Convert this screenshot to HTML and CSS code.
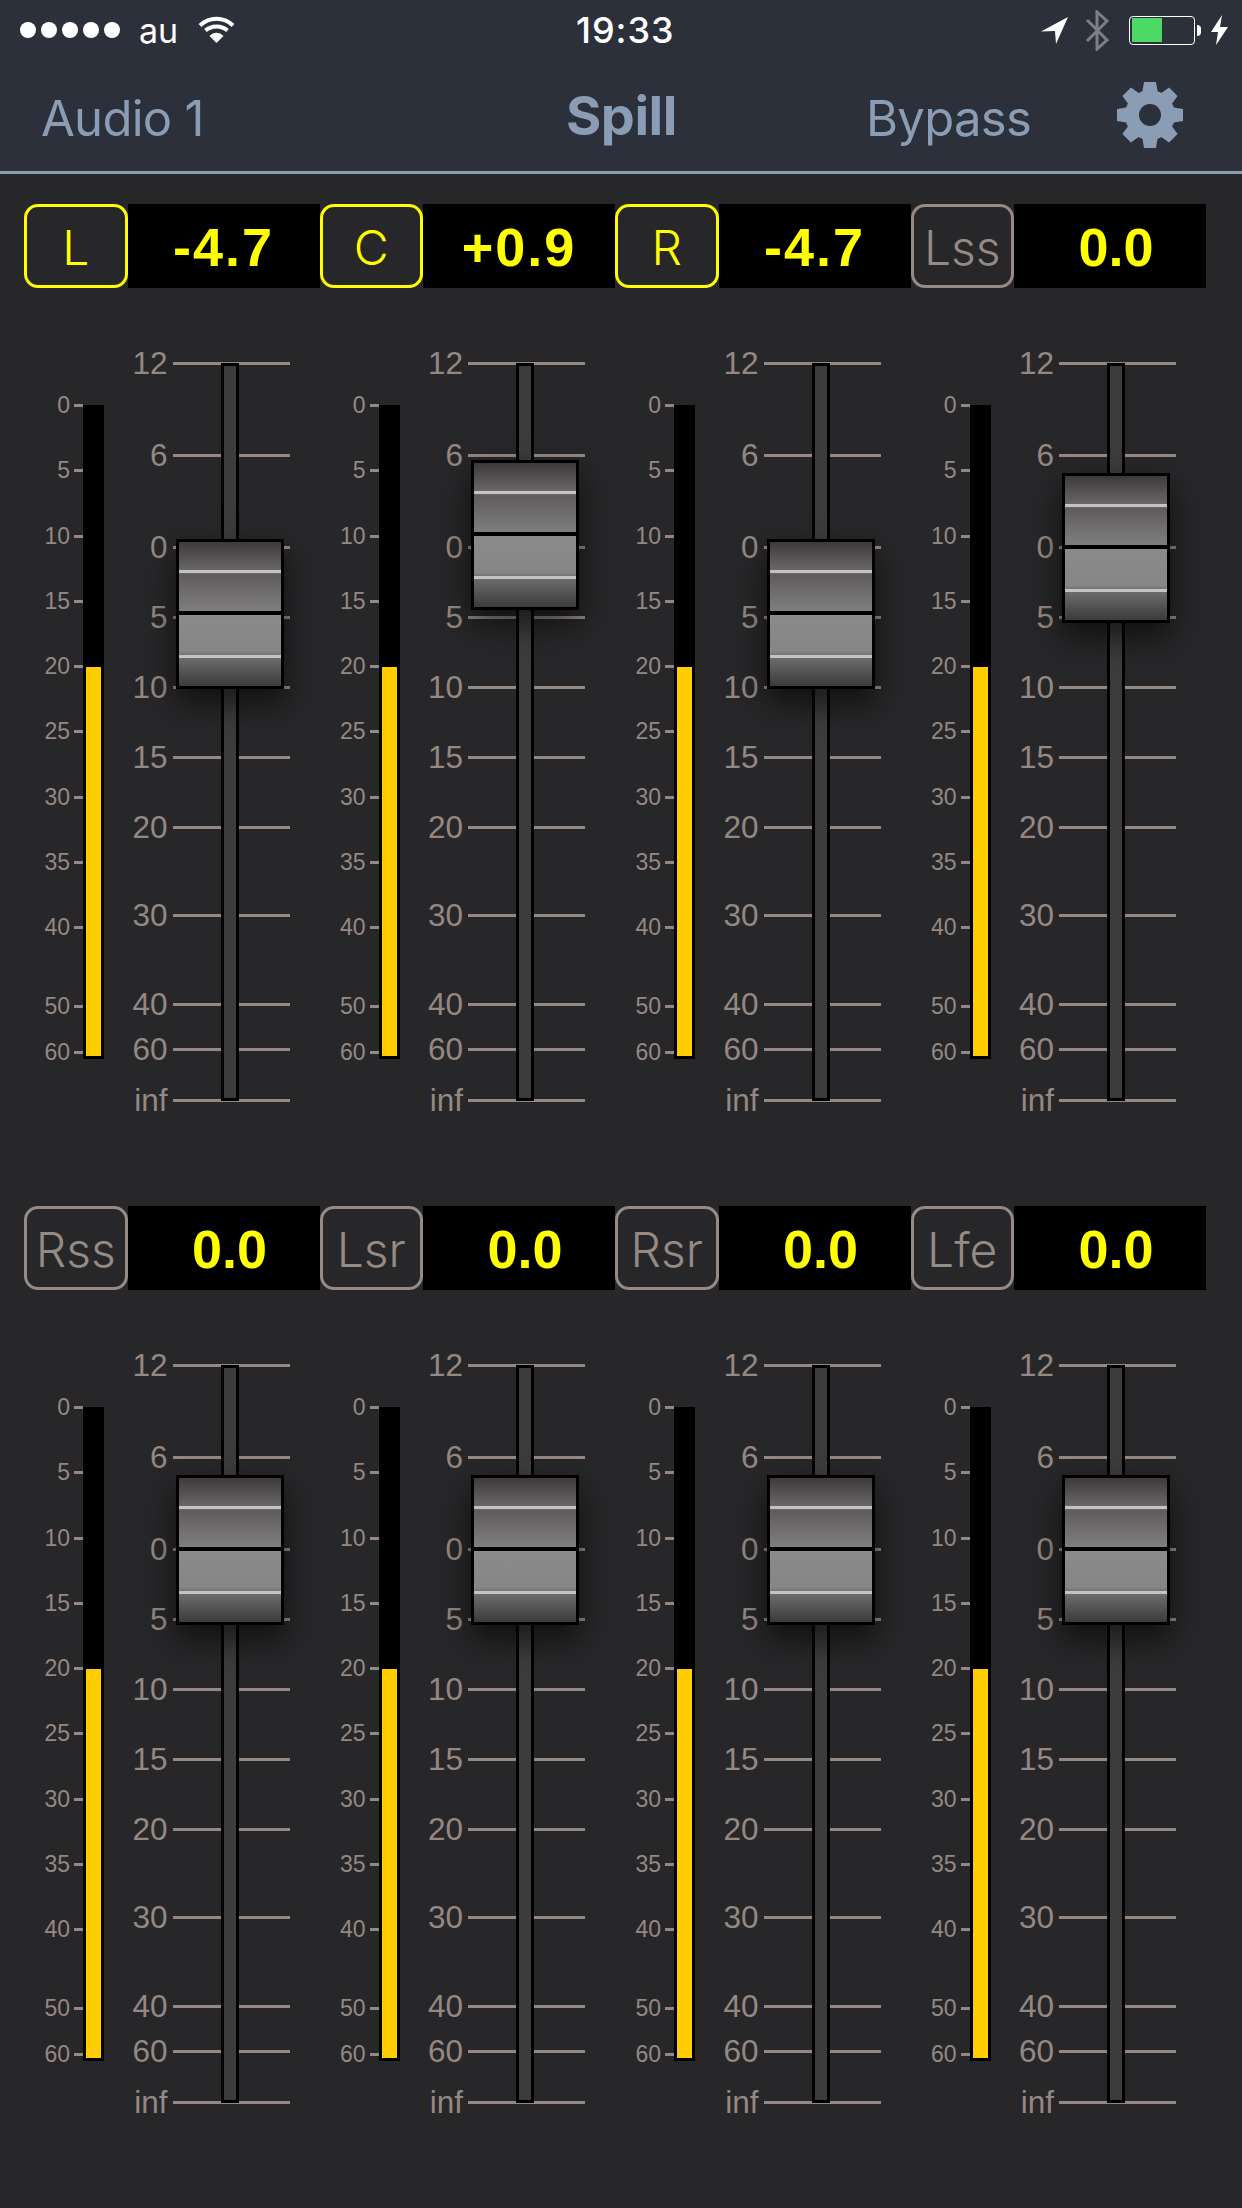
FILE: index.html
```html
<!DOCTYPE html>
<html lang="en">
<head>
  <meta charset="UTF-8">
  <meta name="viewport" content="width=device-width, initial-scale=1.0">
  <title>Spill</title>
  <link rel="stylesheet" href="styles.css">
</head>
<body>
  <header class="topBar">
    <div class="statusBar">
      <div class="statusLeft">
        <div class="signal"><i></i><i></i><i></i><i></i><i></i></div>
        <span class="carrier">au</span>
        <svg class="wifi" viewBox="0 0 37 28">
          <path d="M2 10.5C11.500 1.500 25.500 1.500 35 10.500M7.500 15.500C13.500 10 23.500 10 29.500 15.500" fill="none" stroke="#fff" stroke-width="4"/>
          <path d="M11.500 21C15.500 16.500 21.500 16.500 25.500 21L18.500 28Z" fill="#fff"/>
        </svg>
      </div>
      <span class="clock">19:33</span>
      <div class="statusRight">
        <svg class="arrow" viewBox="0 0 27 27"><path d="M0 14.500L27 0L15 27L14 14Z" fill="#fff"/></svg>
        <svg class="bluetooth" viewBox="0 0 23 41"><path d="M1 10L21 30L11 39V2L21 11L1 31" fill="none" stroke="#7d7f85" stroke-width="3"/></svg>
        <div class="battery"><div class="batteryFill"></div></div>
        <div class="batteryNub"></div>
        <svg class="bolt" viewBox="0 0 17 30"><path d="M11 0L0 17H7L5 30L17 12H9Z" fill="#fff"/></svg>
      </div>
    </div>
    <nav class="navBar">
      <span class="navItem">Audio 1</span>
      <span class="navTitle">Spill</span>
      <span class="navItem">Bypass</span>
      <svg class="gear" viewBox="0 0 66 66">
        <circle cx="33" cy="33" r="25" fill="#8a9db5"/>
        <path d="M27 0H39L41 12H25Z M27 66H39L41 54H25Z" fill="#8a9db5"/>
        <path d="M27 0H39L41 12H25Z M27 66H39L41 54H25Z" fill="#8a9db5" transform="rotate(45 33 33)"/>
        <path d="M27 0H39L41 12H25Z M27 66H39L41 54H25Z" fill="#8a9db5" transform="rotate(90 33 33)"/>
        <path d="M27 0H39L41 12H25Z M27 66H39L41 54H25Z" fill="#8a9db5" transform="rotate(135 33 33)"/>
        <circle cx="33" cy="33" r="11" fill="#2c303b"/>
      </svg>
    </nav>
  </header>

  <main class="mixer">
    <section class="channel">
      <div class="channelHead"><span class="chLabel on">L</span><span class="chValue">-4.7</span></div>
      <div class="channelBody">
        <div class="meterWrap">
          <ol class="meterScale"><li><span>0</span></li><li><span>5</span></li><li><span>10</span></li><li><span>15</span></li><li><span>20</span></li><li><span>25</span></li><li><span>30</span></li><li><span>35</span></li><li><span>40</span></li><li><span>50</span></li><li><span>60</span></li></ol>
          <div class="meter"><div class="meterFill"></div></div>
        </div>
        <div class="fader">
          <ol class="faderScale"><li><span>12</span></li><li><span>6</span></li><li><span>0</span></li><li><span>5</span></li><li><span>10</span></li><li><span>15</span></li><li><span>20</span></li><li><span>30</span></li><li><span>40</span></li><li><span>60</span></li><li><span>inf</span></li></ol>
          <div class="track"></div>
          <div class="thumb" style="top: 176px;"><b></b><b></b></div>
        </div>
      </div>
    </section>

    <section class="channel">
      <div class="channelHead"><span class="chLabel on">C</span><span class="chValue">+0.9</span></div>
      <div class="channelBody">
        <div class="meterWrap">
          <ol class="meterScale"><li><span>0</span></li><li><span>5</span></li><li><span>10</span></li><li><span>15</span></li><li><span>20</span></li><li><span>25</span></li><li><span>30</span></li><li><span>35</span></li><li><span>40</span></li><li><span>50</span></li><li><span>60</span></li></ol>
          <div class="meter"><div class="meterFill"></div></div>
        </div>
        <div class="fader">
          <ol class="faderScale"><li><span>12</span></li><li><span>6</span></li><li><span>0</span></li><li><span>5</span></li><li><span>10</span></li><li><span>15</span></li><li><span>20</span></li><li><span>30</span></li><li><span>40</span></li><li><span>60</span></li><li><span>inf</span></li></ol>
          <div class="track"></div>
          <div class="thumb" style="top: 97px;"><b></b><b></b></div>
        </div>
      </div>
    </section>

    <section class="channel">
      <div class="channelHead"><span class="chLabel on">R</span><span class="chValue">-4.7</span></div>
      <div class="channelBody">
        <div class="meterWrap">
          <ol class="meterScale"><li><span>0</span></li><li><span>5</span></li><li><span>10</span></li><li><span>15</span></li><li><span>20</span></li><li><span>25</span></li><li><span>30</span></li><li><span>35</span></li><li><span>40</span></li><li><span>50</span></li><li><span>60</span></li></ol>
          <div class="meter"><div class="meterFill"></div></div>
        </div>
        <div class="fader">
          <ol class="faderScale"><li><span>12</span></li><li><span>6</span></li><li><span>0</span></li><li><span>5</span></li><li><span>10</span></li><li><span>15</span></li><li><span>20</span></li><li><span>30</span></li><li><span>40</span></li><li><span>60</span></li><li><span>inf</span></li></ol>
          <div class="track"></div>
          <div class="thumb" style="top: 176px;"><b></b><b></b></div>
        </div>
      </div>
    </section>

    <section class="channel">
      <div class="channelHead"><span class="chLabel">Lss</span><span class="chValue zero">0.0</span></div>
      <div class="channelBody">
        <div class="meterWrap">
          <ol class="meterScale"><li><span>0</span></li><li><span>5</span></li><li><span>10</span></li><li><span>15</span></li><li><span>20</span></li><li><span>25</span></li><li><span>30</span></li><li><span>35</span></li><li><span>40</span></li><li><span>50</span></li><li><span>60</span></li></ol>
          <div class="meter"><div class="meterFill"></div></div>
        </div>
        <div class="fader">
          <ol class="faderScale"><li><span>12</span></li><li><span>6</span></li><li><span>0</span></li><li><span>5</span></li><li><span>10</span></li><li><span>15</span></li><li><span>20</span></li><li><span>30</span></li><li><span>40</span></li><li><span>60</span></li><li><span>inf</span></li></ol>
          <div class="track"></div>
          <div class="thumb" style="top: 110px;"><b></b><b></b></div>
        </div>
      </div>
    </section>

    <section class="channel">
      <div class="channelHead"><span class="chLabel">Rss</span><span class="chValue zero">0.0</span></div>
      <div class="channelBody">
        <div class="meterWrap">
          <ol class="meterScale"><li><span>0</span></li><li><span>5</span></li><li><span>10</span></li><li><span>15</span></li><li><span>20</span></li><li><span>25</span></li><li><span>30</span></li><li><span>35</span></li><li><span>40</span></li><li><span>50</span></li><li><span>60</span></li></ol>
          <div class="meter"><div class="meterFill"></div></div>
        </div>
        <div class="fader">
          <ol class="faderScale"><li><span>12</span></li><li><span>6</span></li><li><span>0</span></li><li><span>5</span></li><li><span>10</span></li><li><span>15</span></li><li><span>20</span></li><li><span>30</span></li><li><span>40</span></li><li><span>60</span></li><li><span>inf</span></li></ol>
          <div class="track"></div>
          <div class="thumb" style="top: 110px;"><b></b><b></b></div>
        </div>
      </div>
    </section>

    <section class="channel">
      <div class="channelHead"><span class="chLabel">Lsr</span><span class="chValue zero">0.0</span></div>
      <div class="channelBody">
        <div class="meterWrap">
          <ol class="meterScale"><li><span>0</span></li><li><span>5</span></li><li><span>10</span></li><li><span>15</span></li><li><span>20</span></li><li><span>25</span></li><li><span>30</span></li><li><span>35</span></li><li><span>40</span></li><li><span>50</span></li><li><span>60</span></li></ol>
          <div class="meter"><div class="meterFill"></div></div>
        </div>
        <div class="fader">
          <ol class="faderScale"><li><span>12</span></li><li><span>6</span></li><li><span>0</span></li><li><span>5</span></li><li><span>10</span></li><li><span>15</span></li><li><span>20</span></li><li><span>30</span></li><li><span>40</span></li><li><span>60</span></li><li><span>inf</span></li></ol>
          <div class="track"></div>
          <div class="thumb" style="top: 110px;"><b></b><b></b></div>
        </div>
      </div>
    </section>

    <section class="channel">
      <div class="channelHead"><span class="chLabel">Rsr</span><span class="chValue zero">0.0</span></div>
      <div class="channelBody">
        <div class="meterWrap">
          <ol class="meterScale"><li><span>0</span></li><li><span>5</span></li><li><span>10</span></li><li><span>15</span></li><li><span>20</span></li><li><span>25</span></li><li><span>30</span></li><li><span>35</span></li><li><span>40</span></li><li><span>50</span></li><li><span>60</span></li></ol>
          <div class="meter"><div class="meterFill"></div></div>
        </div>
        <div class="fader">
          <ol class="faderScale"><li><span>12</span></li><li><span>6</span></li><li><span>0</span></li><li><span>5</span></li><li><span>10</span></li><li><span>15</span></li><li><span>20</span></li><li><span>30</span></li><li><span>40</span></li><li><span>60</span></li><li><span>inf</span></li></ol>
          <div class="track"></div>
          <div class="thumb" style="top: 110px;"><b></b><b></b></div>
        </div>
      </div>
    </section>

    <section class="channel">
      <div class="channelHead"><span class="chLabel">Lfe</span><span class="chValue zero">0.0</span></div>
      <div class="channelBody">
        <div class="meterWrap">
          <ol class="meterScale"><li><span>0</span></li><li><span>5</span></li><li><span>10</span></li><li><span>15</span></li><li><span>20</span></li><li><span>25</span></li><li><span>30</span></li><li><span>35</span></li><li><span>40</span></li><li><span>50</span></li><li><span>60</span></li></ol>
          <div class="meter"><div class="meterFill"></div></div>
        </div>
        <div class="fader">
          <ol class="faderScale"><li><span>12</span></li><li><span>6</span></li><li><span>0</span></li><li><span>5</span></li><li><span>10</span></li><li><span>15</span></li><li><span>20</span></li><li><span>30</span></li><li><span>40</span></li><li><span>60</span></li><li><span>inf</span></li></ol>
          <div class="track"></div>
          <div class="thumb" style="top: 110px;"><b></b><b></b></div>
        </div>
      </div>
    </section>
  </main>
</body>
</html>
```

FILE: styles.css
```css
html, body {
  margin: 0;
  padding: 0;
}
body {
  width: 1242px;
  height: 2208px;
  overflow: hidden;
  background: #272729;
  font-family: "Inter", "Liberation Sans", sans-serif;
}
ol {
  list-style: none;
  margin: 0;
  padding: 0;
}

/* status bar + nav */
.topBar {
  background: #2c303b;
  border-bottom: 3px solid #8a9db5;
  height: 171px;
}
.statusBar {
  display: grid;
  grid-template-columns: 576px 98px 1fr;
  height: 60px;
  align-items: center;
  color: #fff;
}
.statusLeft {
  display: flex;
  align-items: center;
  padding-left: 20px;
}
.signal {
  display: flex;
  gap: 5px;
}
.signal i {
  width: 16px;
  height: 16px;
  border-radius: 50%;
  background: #fff;
}
.carrier {
  font-size: 34px;
  margin-left: 19px;
  width: 59px;
}
.wifi {
  width: 37px;
  height: 28px;
  margin-top: -2px;
}
.clock {
  font-size: 36px;
  font-weight: 500;
  letter-spacing: 1px;
  text-align: center;
  white-space: nowrap;
}
.statusRight {
  display: flex;
  align-items: center;
  padding-left: 367px;
}
.arrow {
  width: 27px;
  height: 27px;
}
.bluetooth {
  width: 23px;
  height: 41px;
  margin-left: 18px;
}
.battery {
  width: 66px;
  height: 29px;
  margin-left: 20px;
  box-sizing: border-box;
  border: 1.5px solid #fff;
  border-radius: 4px;
  padding: 1.5px;
}
.batteryFill {
  width: 50%;
  height: 100%;
  background: #4cd964;
}
.batteryNub {
  width: 4px;
  height: 11px;
  margin-left: 2px;
  background: #fff;
  border-radius: 0 5px 5px 0;
}
.bolt {
  width: 17px;
  height: 30px;
  margin-left: 10px;
}
.navBar {
  display: grid;
  grid-template-columns: 525px 300px 251px 66px;
  padding-left: 41px;
  height: 111px;
  align-items: center;
  color: #8a9db5;
}
.navItem {
  font-size: 49px;
  font-weight: 400;
  letter-spacing: -0.7px;
  margin-top: 6px;
}
.navTitle {
  font-size: 54px;
  font-weight: 700;
  letter-spacing: -0.5px;
}
.gear {
  width: 66px;
  height: 66px;
  margin-top: -2px;
}

/* channels */
.mixer {
  display: grid;
  grid-template-columns: repeat(4, 295.5px);
  row-gap: 105px;
  padding: 30px 0 0 24px;
}
.channelHead {
  display: flex;
  height: 84px;
}
.chLabel {
  box-sizing: border-box;
  width: 103.500px;
  height: 84px;
  border: 3px solid #968a85;
  border-radius: 14px;
  color: #968a85;
  font-size: 48px;
  font-weight: 300;
  line-height: 81px;
  text-align: center;
}
.chLabel.on {
  border-color: #ff0;
  color: #ff0;
}
.chValue {
  box-sizing: border-box;
  width: 192px;
  background: #000;
  color: #ff0;
  font-family: "Liberation Sans", sans-serif;
  font-size: 54px;
  font-weight: 700;
  line-height: 86px;
  letter-spacing: 2px;
  text-align: center;
}
.chValue.zero {
  padding-left: 12px;
  letter-spacing: 0;
}
.channelBody {
  display: flex;
  align-items: flex-start;
  padding-top: 75px;
}

/* level meter */
.meterWrap {
  display: flex;
  margin-top: 42px;
}
.meterScale {
  display: grid;
  grid-template-rows: repeat(8, 65.300px) 78.700px 45.600px;
  width: 59px;
  padding-top: 0.5px;
  height: 600px;
}
.meterScale li {
  display: flex;
  align-items: center;
  justify-content: flex-end;
  height: 0;
  font-family: "Liberation Sans", sans-serif;
  font-size: 23px;
  color: #958883;
}
.meterScale li::after {
  content: "";
  width: 9px;
  height: 3px;
  margin-left: 4px;
  background: #958883;
}
.meter {
  box-sizing: border-box;
  display: flex;
  align-items: flex-end;
  width: 21px;
  height: 654px;
  padding: 3px;
  background: #000;
}
.meterFill {
  width: 100%;
  height: 60%;
  background: #fc0;
}

/* fader */
.fader {
  position: relative;
  width: 185.500px;
  height: 738px;
}
.faderScale {
  display: grid;
  grid-template-rows: 92px 92.700px 70.300px 69.700px 70px 70px 88px 89px 45px 50.700px;
}
.faderScale li {
  display: flex;
  align-items: center;
  justify-content: flex-end;
  height: 0;
  font-family: "Liberation Sans", sans-serif;
  font-size: 31.5px;
  color: #958883;
}
.faderScale li::after {
  content: "";
  width: 117px;
  height: 3px;
  margin-left: 5px;
  background: #958883;
}
.track {
  position: absolute;
  left: 116.500px;
  top: 0;
  box-sizing: border-box;
  width: 18px;
  height: 738px;
  border: 3px solid #000;
  background: #3c3c3c;
}
.thumb {
  position: absolute;
  left: 71.500px;
  box-sizing: border-box;
  width: 108px;
  height: 150px;
  border: 3px solid #000;
  box-shadow: 0 14px 30px rgba(0, 0, 0, 0.6);
  background: linear-gradient(#3d393c 0%, #6d6a6c 21%, #605c5e 23%, #7f7e7f 48%, #000 48%, #000 51%, #8b8a8c 51%, #868686 76%, #707070 79%, #3c3a3c 100%);
}
.thumb b {
  position: absolute;
  left: 0;
  right: 0;
  height: 3px;
  background: #c3c3c3;
}
.thumb b:first-child {
  top: 28px;
}
.thumb b:last-child {
  top: 113px;
}
```
